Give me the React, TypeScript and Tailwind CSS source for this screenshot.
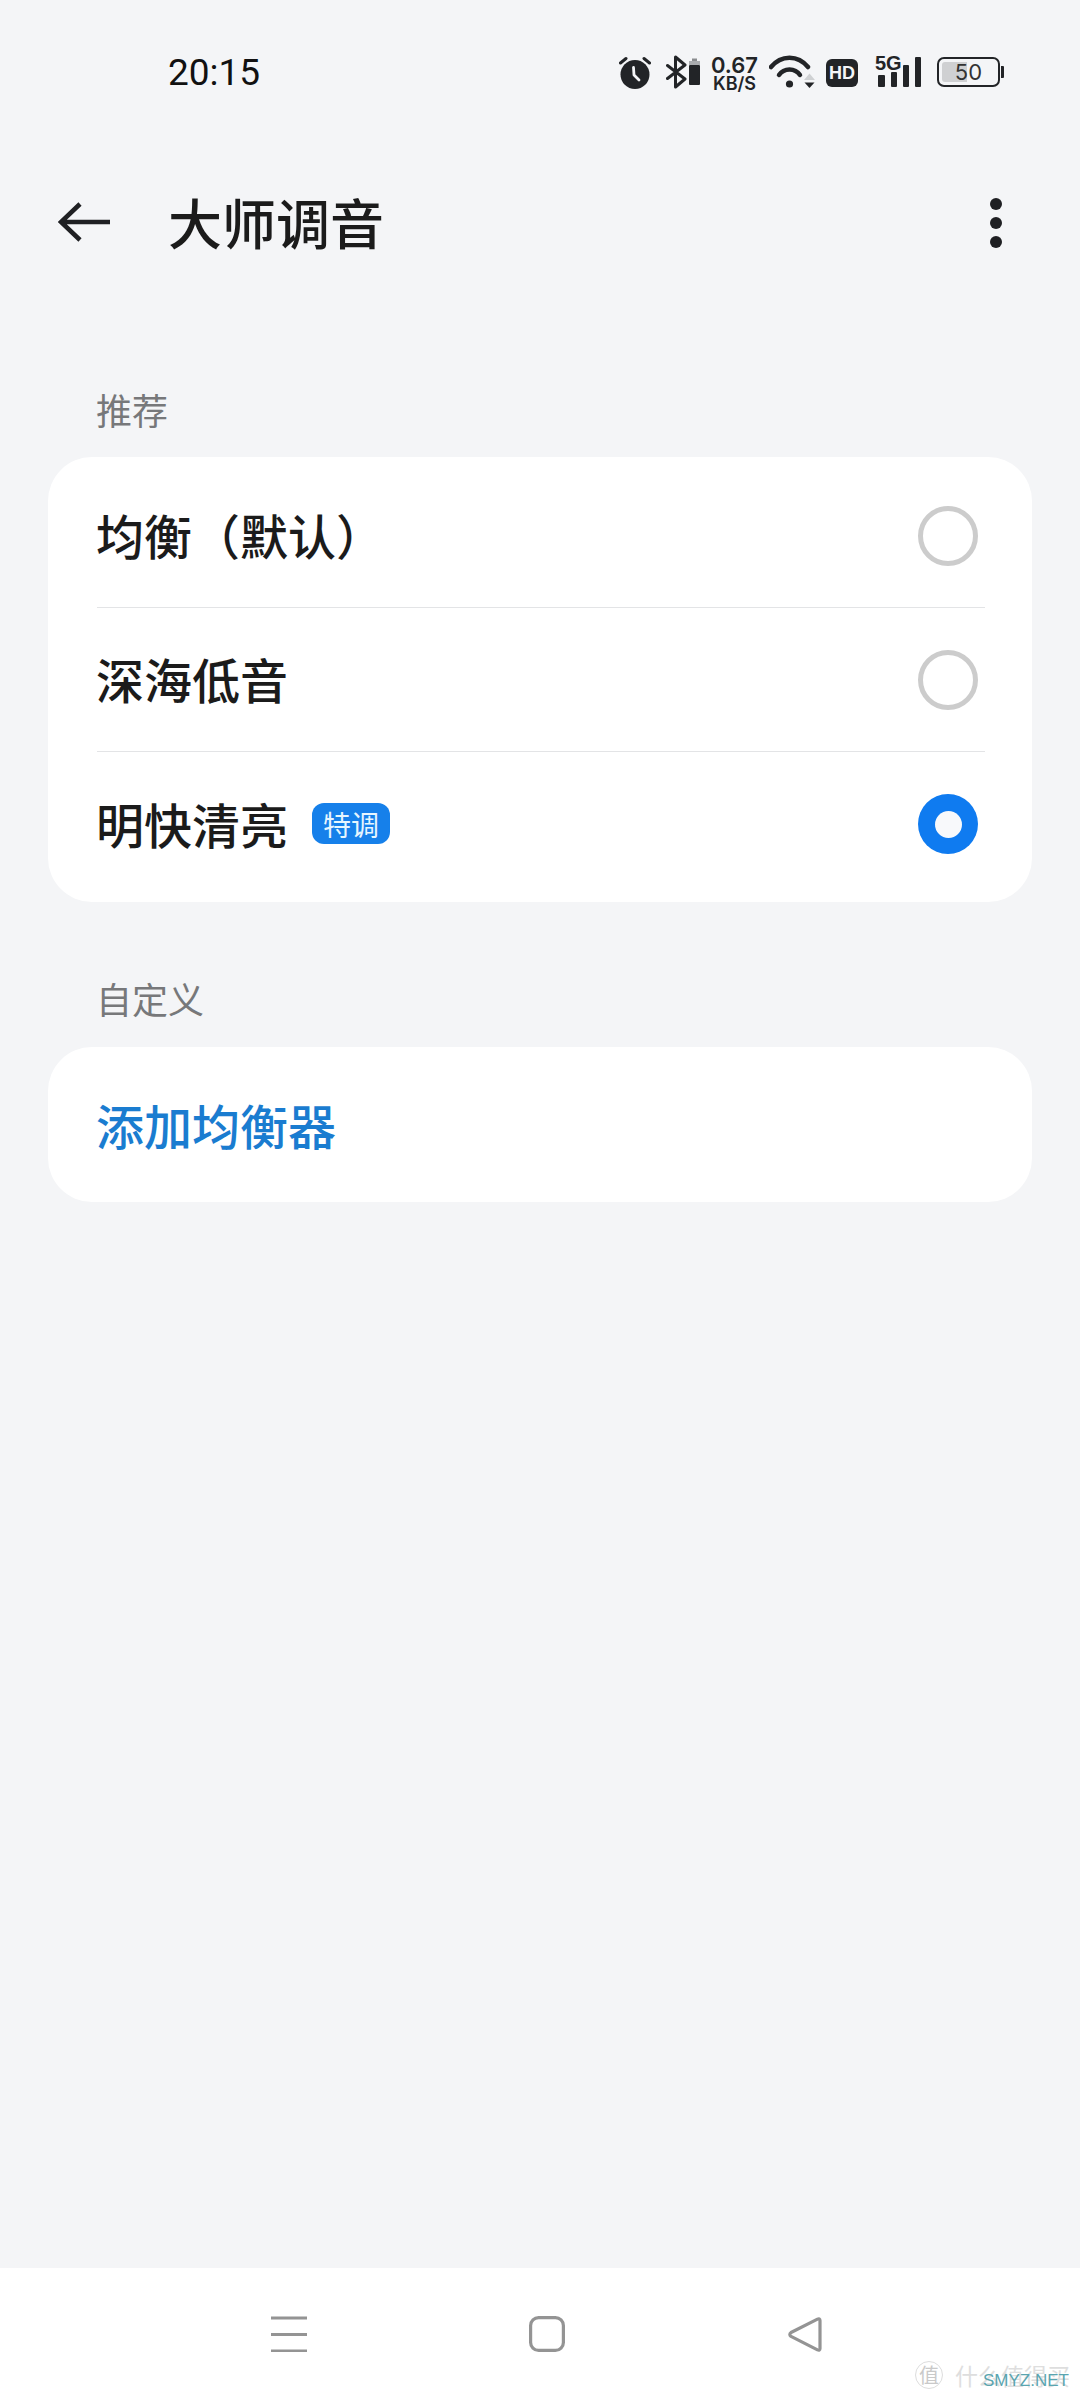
import React from "react";

const FONT = '"Noto Sans CJK SC", "Noto Sans", sans-serif';

function Alarm() {
  return (
    <svg width="32" height="34" viewBox="0 0 32 34" className="block">
      <circle cx="16" cy="19.5" r="14.5" fill="#222427" />
      <path d="M1.5 8 L7 3.5 M30.5 8 L25 3.5" stroke="#222427" strokeWidth="3" strokeLinecap="round" />
      <path d="M14.5 12.5 L15 20 L20 25" stroke="#f4f5f7" strokeWidth="2.8" fill="none" strokeLinecap="round" strokeLinejoin="round" />
    </svg>
  );
}

function BtBattery() {
  return (
    <svg width="34" height="34" viewBox="0 0 34 34" className="block">
      <path d="M1.5 10.5 L19 24 L9.5 32 V2 L19 10 L1.5 23.5" stroke="#222427" strokeWidth="3" fill="none" strokeLinecap="round" strokeLinejoin="round" />
      <path d="M26 3.5 h5 v2.5 h-5z" fill="#8a8c8f" />
      <rect x="23" y="6" width="11" height="4" fill="#a9abae" />
      <rect x="23" y="10" width="11" height="20" rx="1" fill="#222427" />
    </svg>
  );
}

function Wifi() {
  return (
    <svg width="46" height="33" viewBox="0 0 46 33" className="block">
      <path d="M2 12 C12 -0.5 29 -0.5 39 12" stroke="#222427" strokeWidth="4.5" fill="none" strokeLinecap="round" />
      <path d="M10 20 C15 12.5 26 12.5 31 20" stroke="#222427" strokeWidth="4.5" fill="none" strokeLinecap="round" />
      <circle cx="20.5" cy="29" r="3.6" fill="#222427" />
      <path d="M35 25 L40.5 18.5 L46 25 Z" fill="#cfd1d3" />
      <path d="M35.5 27.5 L45.5 27.5 L40.5 33 Z" fill="#222427" />
    </svg>
  );
}

function NavMenu() {
  return (
    <svg width="36" height="36" viewBox="0 0 36 36" className="block">
      <path d="M0 2 H36 M0 18.5 H36 M0 35 H36" stroke="#949494" strokeWidth="3" />
    </svg>
  );
}

function NavHome() {
  return (
    <svg width="36" height="36" viewBox="0 0 36 36" className="block">
      <rect x="1.6" y="1.6" width="32.8" height="32.8" rx="8" stroke="#949494" strokeWidth="3.2" fill="none" />
    </svg>
  );
}

function NavBack() {
  return (
    <svg width="34" height="35" viewBox="0 0 34 35" className="block">
      <path d="M32 3.5 C32 1.8 31 1.4 29.5 2.1 L3 15.5 C1.4 16.6 1.4 18.2 3 19.4 L29.5 32.9 C31 33.6 32 33.2 32 31.5 Z" stroke="#949494" strokeWidth="3.2" fill="none" strokeLinejoin="round" />
    </svg>
  );
}

function Radio({ on }: { on?: boolean }) {
  if (on) {
    return (
      <div className="flex h-[60px] w-[60px] items-center justify-center rounded-full bg-[#0f7bf0]">
        <div className="h-[27px] w-[27px] rounded-full bg-[#f8f9fb]" />
      </div>
    );
  }
  return <div className="h-[60px] w-[60px] rounded-full border-[5px] border-[#cccccc]" />;
}

function Row({ label, badge, on, divider }: { label: string; badge?: string; on?: boolean; divider?: boolean }) {
  return (
    <div className={divider ? "ml-[49px] mr-[47px] flex h-[144px] items-center justify-between border-b border-[#e3e4e6]" : "ml-[49px] mr-[47px] flex h-[144px] items-center justify-between"}>
      <div className="flex items-center">
        <span className="mt-[-3px] ml-[-1px] text-[48px] font-medium leading-none text-[#1b1b1b]">{label}</span>
        {badge && (
          <span className="ml-[24px] mt-[-1px] flex h-[41px] w-[78px] items-center justify-center rounded-[12px] bg-[#1680ea] text-[28px] leading-none text-[#e6f6ff]">
            {badge}
          </span>
        )}
      </div>
      <div className="mr-[7px]">
        <Radio on={on} />
      </div>
    </div>
  );
}

export default function App() {
  return (
    <div className="relative flex h-[2400px] w-[1080px] flex-col overflow-hidden bg-[#f4f5f7]" style={{ fontFamily: FONT }}>
      {/* Status bar */}
      <div className="flex h-[144px] shrink-0 items-start justify-between pl-[168px] pr-[76px] pt-[55px]">
        <span className="mt-[1px] text-[37px] leading-[34px] text-[#111111]" style={{ fontFamily: "Roboto, sans-serif" }}>20:15</span>
        <div className="flex items-start">
          <Alarm />
          <div className="ml-[15px]"><BtBattery /></div>
          <div className="ml-[11px] flex w-[47px] flex-col items-center font-semibold text-[#222427]" style={{ fontFamily: "Inter, sans-serif" }}>
            <span className="text-[22px] leading-[20px]">0.67</span>
            <span className="mt-[1px] text-[18px] leading-[16px]">KB/S</span>
          </div>
          <div className="ml-[11px]"><Wifi /></div>
          <div className="ml-[11px] mt-[4px] flex h-[28px] w-[32px] items-center justify-center rounded-[6px] bg-[#222427] text-[18px] font-bold leading-none text-[#f4f5f7]" style={{ fontFamily: '"Liberation Sans", sans-serif' }}>
            HD
          </div>
          <div className="relative ml-[17px] h-[32px] w-[46px]">
            <span className="absolute left-0 top-[-2px] text-[20px] font-bold leading-[20px] text-[#222427]" style={{ fontFamily: '"Liberation Sans", sans-serif' }}>5G</span>
            <div className="absolute bottom-0 left-[3px] h-[12px] w-[7px] rounded-[1px] bg-[#222427]" />
            <div className="absolute bottom-0 left-[16px] h-[15px] w-[6px] rounded-[1px] bg-[#222427]" />
            <div className="absolute bottom-0 left-[28px] h-[22px] w-[6px] rounded-[1px] bg-[#222427]" />
            <div className="absolute bottom-0 left-[40px] h-[30px] w-[6px] rounded-[1px] bg-[#222427]" />
          </div>
          <div className="ml-[16px] mt-[2px] flex items-center">
            <div className="relative h-[30px] w-[63px] overflow-hidden rounded-[7px] border-[2.5px] border-[#222427] p-[3px]">
              <div className="h-full w-[25px] rounded-l-[3px] bg-[#cfd0d2]" />
              <span className="absolute inset-0 flex items-center justify-center text-[22px] leading-none text-[#333333]" style={{ fontFamily: "Inter, sans-serif" }}>50</span>
            </div>
            <div className="ml-[1px] h-[12px] w-[3px] rounded-r-[1px] bg-[#222427]" />
          </div>
        </div>
      </div>

      {/* Header */}
      <div className="flex h-[156px] shrink-0 items-center pl-[58px] pr-[78px]">
        <svg width="52" height="40" viewBox="0 0 52 40" className="block shrink-0">
          <path d="M52 20 H3 M22 2 L3 20 L22 38" stroke="#1f2023" strokeWidth="4.6" fill="none" />
        </svg>
        <span className="ml-[58px] text-[54px] font-medium leading-none text-[#1b1b1b]">大师调音</span>
        <div className="ml-auto mt-[2px] flex flex-col gap-[7px]">
          <div className="h-[12px] w-[12px] rounded-full bg-[#1f2023]" />
          <div className="h-[12px] w-[12px] rounded-full bg-[#1f2023]" />
          <div className="h-[12px] w-[12px] rounded-full bg-[#1f2023]" />
        </div>
      </div>

      {/* Content */}
      <div className="flex flex-1 flex-col px-[48px]">
        <div className="pl-[48px] pt-[85px] text-[36px] leading-[48px] text-[#77787a]">推荐</div>
        <div className="mt-[24px] rounded-[44px] bg-white pb-[6px] pt-[7px]">
          <Row label="均衡（默认）" divider />
          <Row label="深海低音" divider />
          <Row label="明快清亮" badge="特调" on />
        </div>
        <div className="pl-[48px] pt-[72px] text-[36px] leading-[48px] text-[#77787a]">自定义</div>
        <div className="mt-[25px] flex h-[155px] items-center rounded-[44px] bg-white pl-[48px]">
          <span className="mt-[-1px] text-[48px] font-medium leading-none text-[#1a7cd0]">添加均衡器</span>
        </div>
      </div>

      {/* Nav */}
      <div className="flex h-[132px] shrink-0 items-start bg-white pl-[271px] pt-[48px]">
        <NavMenu />
        <div className="ml-[222px]"><NavHome /></div>
        <div className="ml-[223px] mt-[1px]"><NavBack /></div>
      </div>

      {/* Watermark */}
      <div className="absolute left-[915px] top-[2361px] flex h-[28px] items-center text-[#dedede]">
        <div className="flex h-[28px] w-[28px] items-center justify-center rounded-full border border-[#dddddd] text-[20px] leading-none text-[#c9c9c9]">值</div>
        <span className="ml-[12px] text-[23px] leading-none">什么值得买</span>
      </div>
      <div className="absolute left-[983px] top-[2372px] text-[17px] leading-none text-[#5aa5b0]" style={{ fontFamily: '"Liberation Sans", sans-serif' }}>SMYZ.NET</div>
    </div>
  );
}
